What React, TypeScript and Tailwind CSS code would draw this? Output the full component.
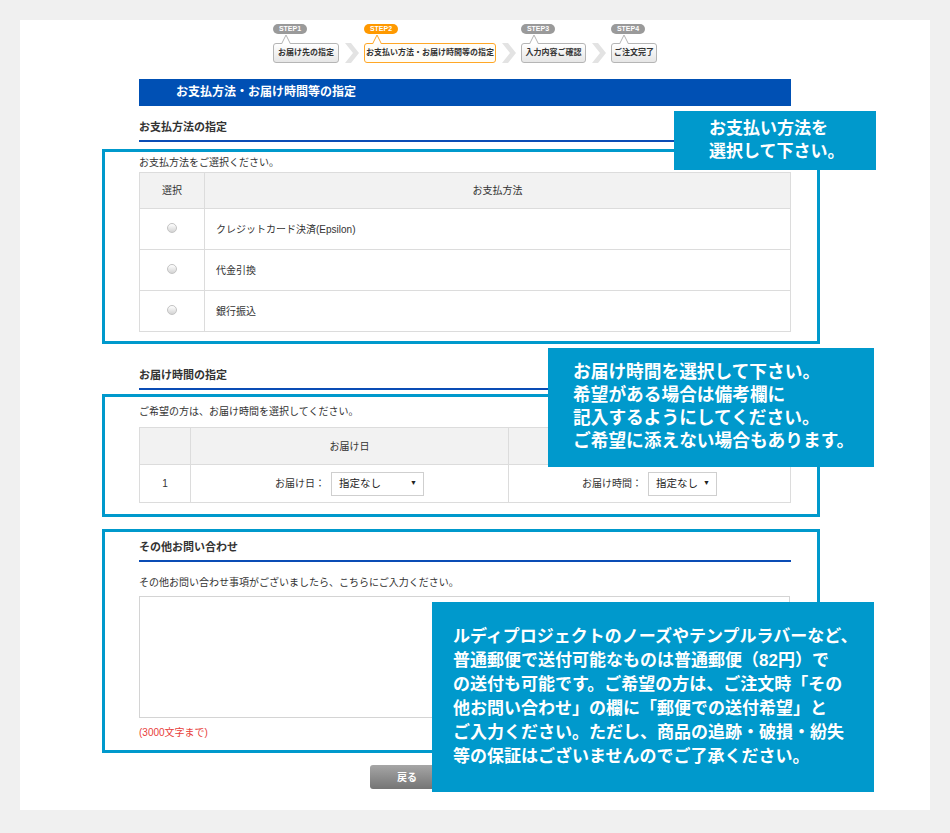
import React from "react";

const steps = [
  { label: "STEP1", text: "お届け先の指定", width: "w-[66px]", active: false },
  { label: "STEP2", text: "お支払い方法・お届け時間等の指定", width: "w-[132px]", active: true },
  { label: "STEP3", text: "入力内容ご確認", width: "w-[65px]", active: false },
  { label: "STEP4", text: "ご注文完了", width: "w-[46px]", active: false },
];

function Chevron() {
  return (
    <svg width="14" height="20" viewBox="0 0 14 20" className="ml-[6px] mr-[5px] self-end">
      <polygon points="0,0 6,0 14,10 6,20 0,20 8,10" fill="#e3e3e3" />
    </svg>
  );
}

function StepBar() {
  return (
    <div className="flex justify-center">
      {steps.map((s, i) => (
        <React.Fragment key={s.label}>
          {i > 0 && <Chevron />}
          <div className="flex flex-col items-start">
            <div
              className={
                "h-[10px] w-[34px] rounded-full text-center text-[7px] font-bold leading-[10px] text-white " +
                (s.active ? "bg-[#ff9900]" : "bg-[#9a9a9a]")
              }
            >
              {s.label}
            </div>
            <svg width="10" height="10" viewBox="0 0 10 10" className="relative z-10 -mb-px ml-[8px]">
              <path d="M0.5 10 L5 1 L9.5 10" fill="white" stroke={s.active ? "#ffa726" : "#b5b5b5"} strokeWidth="1" />
            </svg>
            <div
              className={
                s.width +
                " h-[20px] rounded-[3px] border text-center text-[8px] font-bold leading-[18px] text-[#333] " +
                (s.active
                  ? "border-[#ffa726] bg-[#fffdf7]"
                  : "border-[#b5b5b5] bg-linear-to-b from-white to-[#e6e6e6]")
              }
            >
              {s.text}
            </div>
          </div>
        </React.Fragment>
      ))}
    </div>
  );
}

function SectionTitle({ children, className }: { children: React.ReactNode; className: string }) {
  return (
    <div className={"border-b-2 border-[#0a4cb5] pb-[6px] text-[11px] font-bold leading-[14px] text-[#333] " + className}>
      {children}
    </div>
  );
}

function Radio() {
  return (
    <span className="inline-block h-[10px] w-[10px] rounded-full border border-[#c4c4c4] bg-linear-to-b from-white to-[#d4d4d4]" />
  );
}

function FakeSelect({ width }: { width: string }) {
  return (
    <div className={width + " flex h-[24px] items-center justify-between border border-[#cfcfcf] bg-white pl-[7px] pr-[6px]"}>
      <span className="text-[10.5px] text-[#222]">指定なし</span>
      <span className="text-[7px] text-[#222]">▼</span>
    </div>
  );
}

const payments = ["クレジットカード決済(Epsilon)", "代金引換", "銀行振込"];

export default function App() {
  return (
    <div className="min-h-[833px] w-full bg-[#f0f0f0] p-[20px] font-['Liberation_Sans','Noto_Sans_CJK_JP',sans-serif]">
      <div className="relative h-[790px] w-[910px] bg-white pt-[4px]">
        <div className="ml-[119px] w-[652px]">
          <StepBar />

          <div className="mt-[16px] h-[27px] bg-[#0050b4] pl-[37px] text-[12px] font-bold leading-[27px] text-white">
            お支払方法・お届け時間等の指定
          </div>

          <SectionTitle className="mt-[14px]">お支払方法の指定</SectionTitle>
          <p className="mt-[14px] text-[10px] leading-[14px] text-[#333]">お支払方法をご選択ください。</p>
          <table className="mt-[2px] w-full border-collapse text-[10px] text-[#333]">
            <thead>
              <tr className="h-[36px] bg-[#f2f2f2]">
                <th className="w-[65px] border border-[#dcdcdc] font-normal">選択</th>
                <th className="border border-[#dcdcdc] font-normal">お支払方法</th>
              </tr>
            </thead>
            <tbody>
              {payments.map((p) => (
                <tr key={p} className="h-[41px]">
                  <td className="border border-[#dcdcdc] text-center">
                    <Radio />
                  </td>
                  <td className="border border-[#dcdcdc] pl-[11px]">{p}</td>
                </tr>
              ))}
            </tbody>
          </table>

          <SectionTitle className="mt-[36px]">お届け時間の指定</SectionTitle>
          <p className="mt-[15px] text-[10px] leading-[14px] text-[#333]">ご希望の方は、お届け時間を選択してください。</p>
          <table className="mt-[8px] w-full border-collapse text-[10px] text-[#333]">
            <thead>
              <tr className="h-[37px] bg-[#f2f2f2]">
                <th className="w-[51px] border border-[#dcdcdc] font-normal"></th>
                <th className="w-[318px] border border-[#dcdcdc] font-normal">お届け日</th>
                <th className="border border-[#dcdcdc] font-normal"></th>
              </tr>
            </thead>
            <tbody>
              <tr className="h-[38px]">
                <td className="border border-[#dcdcdc] text-center">1</td>
                <td className="border border-[#dcdcdc]">
                  <div className="flex items-center justify-center gap-[6px]">
                    <span>お届け日：</span>
                    <FakeSelect width="w-[93px]" />
                  </div>
                </td>
                <td className="border border-[#dcdcdc]">
                  <div className="flex items-center justify-center gap-[6px]">
                    <span>お届け時間：</span>
                    <FakeSelect width="w-[69px]" />
                  </div>
                </td>
              </tr>
            </tbody>
          </table>

          <SectionTitle className="mt-[37px]">その他お問い合わせ</SectionTitle>
          <p className="mt-[14px] text-[10px] leading-[14px] text-[#333]">
            その他お問い合わせ事項がございましたら、こちらにご入力ください。
          </p>
          <textarea className="mt-[6px] block h-[122px] w-[651px] resize-none border border-[#d4d4d4] bg-white outline-none" />
          <p className="mt-[8px] text-[10px] leading-[14px] text-[#e8403a]">(3000文字まで)</p>

          <div className="mt-[25px] flex">
            <button className="ml-[231px] h-[24px] w-[74px] rounded-[3px] bg-linear-to-b from-[#a6a6a6] to-[#757575] text-[10px] font-bold text-white">
              戻る
            </button>
          </div>
        </div>

        {/* annotation frames */}
        <div className="pointer-events-none absolute left-[82px] top-[129px] h-[195px] w-[718px] border-[3px] border-[#0099cc]" />
        <div className="pointer-events-none absolute left-[82px] top-[374px] h-[123px] w-[718px] border-[3px] border-[#0099cc]" />
        <div className="pointer-events-none absolute left-[82px] top-[509px] h-[224px] w-[718px] border-[3px] border-[#0099cc]" />

        {/* annotation callouts */}
        <div className="absolute left-[654px] top-[91px] h-[59px] w-[202px] bg-[#0099cc] pl-[35px] pt-[6px] text-[17px] font-bold leading-[23px] text-white">
          お支払い方法を
          <br />
          選択して下さい。
        </div>
        <div className="absolute left-[528px] top-[328px] h-[119px] w-[326px] whitespace-nowrap bg-[#0099cc] pl-[25px] pt-[13px] text-[17.7px] font-bold leading-[23px] text-white">
          お届け時間を選択して下さい。
          <br />
          希望がある場合は備考欄に
          <br />
          記入するようにしてください。
          <br />
          ご希望に添えない場合もあります。
        </div>
        <div className="absolute left-[412px] top-[582px] h-[190px] w-[442px] whitespace-nowrap bg-[#0099cc] pl-[21px] pt-[23px] text-[17px] font-bold leading-[24px] text-white">
          ルディプロジェクトのノーズやテンプルラバーなど、
          <br />
          普通郵便で送付可能なものは普通郵便（82円）で
          <br />
          の送付も可能です。ご希望の方は、ご注文時「その
          <br />
          他お問い合わせ」の欄に「郵便での送付希望」と
          <br />
          ご入力ください。ただし、商品の追跡・破損・紛失
          <br />
          等の保証はございませんのでご了承ください。
        </div>
      </div>
    </div>
  );
}
